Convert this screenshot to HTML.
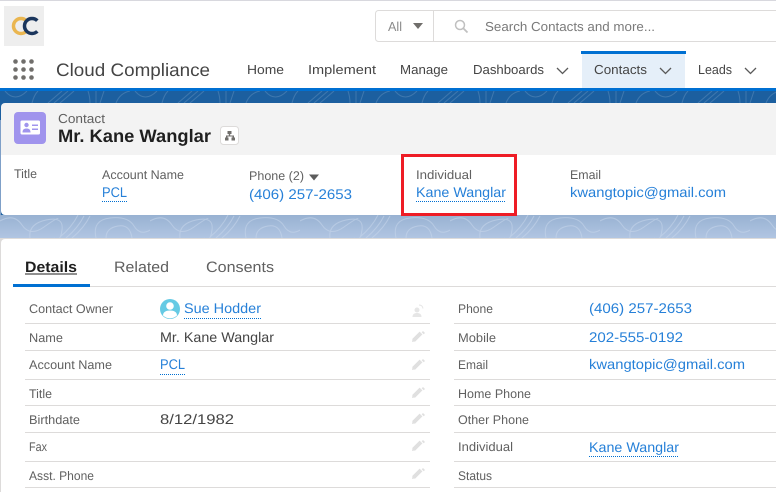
<!DOCTYPE html>
<html lang="en"><head><meta charset="utf-8"><title>Contact</title>
<style>
html,body{margin:0;padding:0;background:#fff;width:776px;height:492px;overflow:hidden}
svg{display:block;filter:blur(.3px)}
text{font-family:"Liberation Sans",sans-serif;text-rendering:geometricPrecision}
.l{font-size:12.5px;fill:#606060}
.v{font-size:14px;fill:#444444}
.a{font-size:14px;fill:#2680d8}
.n{font-size:13px;fill:#444444}
.d{stroke:#0070d2;stroke-width:1;stroke-dasharray:1 1;fill:none}
.r{stroke:#dddbda;stroke-width:1}
</style></head><body>
<svg width="776" height="492" viewBox="0 0 776 492" xmlns="http://www.w3.org/2000/svg">
<defs>
<g id="pen"><path d="M-4.500 4.500L3 -3" stroke="#e0e0e0" stroke-width="4" fill="none"/><path d="M-6 6l.6-3 2.400 2.400z" fill="#e0e0e0"/><path d="M3.700 -3.700l1.300-1.300 2 2-1.300 1.300z" fill="#e0e0e0"/></g>
<path id="chev" d="M0 0l5.500 5.500L11 0" fill="none" stroke="#5a5a5a" stroke-width="1.300"/>
<linearGradient id="bg" x1="0" y1="0" x2="0" y2="1"><stop offset="0" stop-color="#98b2d2"/><stop offset="1" stop-color="#b2c6e3"/></linearGradient>
<pattern id="top" width="130" height="12" patternUnits="userSpaceOnUse" x="0" y="91">
<path d="M5 0q10 12 22 0M32 12q2-8 6-12M48 12l14-12M54 12l14-12M60 12l14-12M88 0q2 6 2 12M96 0v12M104 0q-2 6-4 12M116 12q4-10 14-12" fill="none" stroke="#5f8fbe" stroke-width="1" opacity=".5"/>
</pattern>
<pattern id="bot" width="150" height="23" patternUnits="userSpaceOnUse" x="0" y="215">
<path d="M0 6q14-8 22 4t22 2 14-8M30 23q-2-14 16-18t16 10-8 8M60 22q12-10 18-22M66 23q12-10 18-22M72 23q12-10 18-22M96 23q-4-18 14-20t24 8 16 4M106 23q0-10 12-12t14 12" fill="none" stroke="#c8d6ea" stroke-width="1" opacity=".55"/>
</pattern>
</defs>

<rect width="776" height="492" fill="#fff"/>
<rect width="776" height="1" fill="#d8d8de"/>

<!-- logo -->
<rect x="4" y="6" width="40" height="40" fill="#eeeeee"/>
<path d="M26.300 20.700a7.500 7.500 0 1 0 0 10.600" fill="none" stroke="#eab650" stroke-width="3.500"/>
<path d="M37.300 20.700a7.500 7.500 0 1 0 0 10.600" fill="none" stroke="#1b365d" stroke-width="3.500"/>

<!-- search -->
<rect x="375.500" y="10.500" width="420" height="31" rx="3" fill="#fff" stroke="#dddbda"/>
<line x1="433.500" y1="11" x2="433.500" y2="41" stroke="#dddbda"/>
<text x="388" y="31" font-size="13" fill="#8a8a8a" textLength="14" lengthAdjust="spacingAndGlyphs">All</text>
<path d="M413 23h10l-5 6z" fill="#706e6b"/>
<circle cx="460" cy="25" r="4.500" fill="none" stroke="#c0c0c0" stroke-width="1.500"/>
<path d="M463.500 28.500l4 4" stroke="#c0c0c0" stroke-width="1.800"/>
<text x="485" y="31" font-size="13" fill="#7a7a7a" textLength="170" lengthAdjust="spacingAndGlyphs">Search Contacts and more...</text>

<!-- nav -->
<g fill="#706e6b">
<circle cx="15.500" cy="61.500" r="2.300"/><circle cx="23.500" cy="61.500" r="2.300"/><circle cx="31.500" cy="61.500" r="2.300"/>
<circle cx="15.500" cy="69.500" r="2.300"/><circle cx="23.500" cy="69.500" r="2.300"/><circle cx="31.500" cy="69.500" r="2.300"/>
<circle cx="15.500" cy="77.500" r="2.300"/><circle cx="23.500" cy="77.500" r="2.300"/><circle cx="31.500" cy="77.500" r="2.300"/>
</g>
<text x="56" y="76" font-size="18" fill="#444444" textLength="154" lengthAdjust="spacingAndGlyphs">Cloud Compliance</text>
<rect x="582" y="54" width="103" height="34" fill="#e5eff9"/>
<rect x="581" y="51" width="105" height="3" fill="#0070d2"/>
<text class="n" x="247" y="74" textLength="37" lengthAdjust="spacingAndGlyphs">Home</text>
<text class="n" x="308" y="74" textLength="68" lengthAdjust="spacingAndGlyphs">Implement</text>
<text class="n" x="400" y="74" textLength="48" lengthAdjust="spacingAndGlyphs">Manage</text>
<text class="n" x="473" y="74" textLength="71" lengthAdjust="spacingAndGlyphs">Dashboards</text>
<use href="#chev" x="557" y="68"/>
<text class="n" x="594" y="74" textLength="53" lengthAdjust="spacingAndGlyphs">Contacts</text>
<use href="#chev" x="660" y="68"/>
<text class="n" x="698" y="74" textLength="34" lengthAdjust="spacingAndGlyphs">Leads</text>
<use href="#chev" x="745" y="68"/>

<!-- bands -->
<rect y="88" width="776" height="3" fill="#0070d2"/>
<rect y="91" width="776" height="125" fill="#1c5f9f"/>
<rect y="91" width="776" height="12" fill="url(#top)"/>
<rect y="215" width="776" height="24" fill="url(#bg)"/>
<rect y="215" width="776" height="23" fill="url(#bot)"/>
<rect y="120" width="1" height="95" fill="#7fa0c8"/>

<!-- highlights card -->
<path d="M1 107a4 4 0 0 1 4-4H776V155H1z" fill="#f3f3f3"/>
<path d="M1 155H776V215H5a4 4 0 0 1-4-4z" fill="#fff"/>
<rect x="14" y="112" width="32" height="32" rx="4" fill="#a094ed"/>
<rect x="20.500" y="120.500" width="19.500" height="14" rx="1.500" fill="#fff"/>
<circle cx="26.500" cy="125" r="2.200" fill="#a094ed"/>
<path d="M22.500 132.500c0-3 1.500-4 4-4s4 1 4 4z" fill="#a094ed"/>
<rect x="32" y="124.500" width="6" height="1.500" fill="#a094ed"/>
<rect x="32" y="128.500" width="6" height="1.500" fill="#a094ed"/>
<text x="58" y="123" font-size="13" fill="#606060" textLength="47" lengthAdjust="spacingAndGlyphs">Contact</text>
<text x="58" y="142" font-size="18" font-weight="700" fill="#1f1f1f" textLength="153" lengthAdjust="spacingAndGlyphs">Mr. Kane Wanglar</text>
<rect x="220.500" y="126.500" width="18" height="18" rx="3" fill="#fff" stroke="#dddbda"/>
<path d="M227.500 131h4v3h-1.300v1.500h3.800v2h1v3h-3.500v-3h1v-1h-5v1h1v3H225v-3h1v-2h2.800V134h-1.300z" fill="#706e6b"/>

<text class="l" x="14" y="178" textLength="23" lengthAdjust="spacingAndGlyphs">Title</text>
<text class="l" x="102" y="179" textLength="82" lengthAdjust="spacingAndGlyphs">Account Name</text>
<text class="a" x="102" y="197" textLength="25" lengthAdjust="spacingAndGlyphs">PCL</text>
<line class="d" x1="102" y1="201.500" x2="127" y2="201.500"/>
<text class="l" x="249" y="180" textLength="55" lengthAdjust="spacingAndGlyphs">Phone (2)</text>
<path d="M309 174.500h10l-5 6z" fill="#5c5c5c"/>
<text class="a" x="249" y="199" textLength="103" lengthAdjust="spacingAndGlyphs">(406) 257-2653</text>
<text class="l" x="416" y="179" textLength="56" lengthAdjust="spacingAndGlyphs">Individual</text>
<text class="a" x="416" y="197" textLength="90" lengthAdjust="spacingAndGlyphs">Kane Wanglar</text>
<line class="d" x1="416" y1="201.500" x2="506" y2="201.500"/>
<text class="l" x="570" y="179" textLength="31" lengthAdjust="spacingAndGlyphs">Email</text>
<text class="a" x="570" y="197" textLength="156" lengthAdjust="spacingAndGlyphs">kwangtopic@gmail.com</text>
<rect x="402.500" y="155.500" width="113" height="59" fill="none" stroke="#ee1c25" stroke-width="3"/>

<!-- details card -->
<rect y="238" width="776" height="254" fill="#dddbda"/>
<path d="M1 243a4 4 0 0 1 4-4H776V492H1z" fill="#fff"/>
<text x="25" y="272" font-size="15" font-weight="700" fill="#1f1f1f" textLength="52" lengthAdjust="spacingAndGlyphs">Details</text>
<rect x="25" y="273.500" width="52" height="1" fill="#1f1f1f"/>
<text x="114" y="272" font-size="15" fill="#606060" textLength="55" lengthAdjust="spacingAndGlyphs">Related</text>
<text x="206" y="272" font-size="15" fill="#606060" textLength="68" lengthAdjust="spacingAndGlyphs">Consents</text>
<rect x="13" y="286" width="763" height="1" fill="#dddbda"/>
<rect x="13" y="284" width="77" height="3" fill="#0070d2"/>

<!-- rows -->
<g class="r">
<line x1="25" y1="323.500" x2="430" y2="323.500"/><line x1="25" y1="350.500" x2="430" y2="350.500"/><line x1="25" y1="379.500" x2="430" y2="379.500"/><line x1="25" y1="405.500" x2="430" y2="405.500"/><line x1="25" y1="432.500" x2="430" y2="432.500"/><line x1="25" y1="461.500" x2="430" y2="461.500"/><line x1="25" y1="487.500" x2="430" y2="487.500"/>
<line x1="454" y1="323.500" x2="776" y2="323.500"/><line x1="454" y1="350.500" x2="776" y2="350.500"/><line x1="454" y1="379.500" x2="776" y2="379.500"/><line x1="454" y1="405.500" x2="776" y2="405.500"/><line x1="454" y1="432.500" x2="776" y2="432.500"/><line x1="454" y1="461.500" x2="776" y2="461.500"/><line x1="454" y1="487.500" x2="776" y2="487.500"/>
</g>

<text class="l" x="29" y="313" textLength="84" lengthAdjust="spacingAndGlyphs">Contact Owner</text>
<text class="l" x="29" y="342" textLength="34" lengthAdjust="spacingAndGlyphs">Name</text>
<text class="l" x="29" y="369" textLength="83" lengthAdjust="spacingAndGlyphs">Account Name</text>
<text class="l" x="29" y="398" textLength="23" lengthAdjust="spacingAndGlyphs">Title</text>
<text class="l" x="29" y="424" textLength="51" lengthAdjust="spacingAndGlyphs">Birthdate</text>
<text class="l" x="29" y="451" textLength="18" lengthAdjust="spacingAndGlyphs">Fax</text>
<text class="l" x="29" y="480" textLength="65" lengthAdjust="spacingAndGlyphs">Asst. Phone</text>

<circle cx="170" cy="309" r="10" fill="#65cae4"/>
<circle cx="170" cy="306" r="3.800" fill="#fff"/>
<path d="M163 315.500c0-3.500 3-5 7-5s7 1.500 7 5a10 10 0 0 1-14 0z" fill="#fff"/>
<text class="a" x="184" y="313" textLength="77" lengthAdjust="spacingAndGlyphs">Sue Hodder</text>
<line class="d" x1="184" y1="318.500" x2="261" y2="318.500"/>
<text class="v" x="160" y="342" textLength="114" lengthAdjust="spacingAndGlyphs">Mr. Kane Wanglar</text>
<text class="a" x="160" y="369" textLength="25" lengthAdjust="spacingAndGlyphs">PCL</text>
<line class="d" x1="160" y1="374.500" x2="185" y2="374.500"/>
<text class="v" x="160" y="424" textLength="74" lengthAdjust="spacingAndGlyphs">8/12/1982</text>

<circle cx="417" cy="310" r="2.500" fill="#e6e6e6"/>
<path d="M412.500 317c0-3 2-4 4.500-4s4.500 1 4.500 4z" fill="#e6e6e6"/>
<path d="M419 305q3.500 0 4 3.500" fill="none" stroke="#e6e6e6" stroke-width="1"/>
<use href="#pen" x="418" y="336"/><use href="#pen" x="418" y="364"/><use href="#pen" x="418" y="392"/><use href="#pen" x="418" y="418"/><use href="#pen" x="418" y="445"/><use href="#pen" x="418" y="473"/>

<text class="l" x="458" y="313" textLength="35" lengthAdjust="spacingAndGlyphs">Phone</text>
<text class="l" x="458" y="342" textLength="38" lengthAdjust="spacingAndGlyphs">Mobile</text>
<text class="l" x="458" y="369" textLength="30" lengthAdjust="spacingAndGlyphs">Email</text>
<text class="l" x="458" y="398" textLength="73" lengthAdjust="spacingAndGlyphs">Home Phone</text>
<text class="l" x="458" y="424" textLength="71" lengthAdjust="spacingAndGlyphs">Other Phone</text>
<text class="l" x="458" y="451" textLength="55" lengthAdjust="spacingAndGlyphs">Individual</text>
<text class="l" x="458" y="480" textLength="34" lengthAdjust="spacingAndGlyphs">Status</text>

<text class="a" x="589" y="313" textLength="103" lengthAdjust="spacingAndGlyphs">(406) 257-2653</text>
<text class="a" x="589" y="342" textLength="94" lengthAdjust="spacingAndGlyphs">202-555-0192</text>
<text class="a" x="589" y="369" textLength="156" lengthAdjust="spacingAndGlyphs">kwangtopic@gmail.com</text>
<text class="a" x="589" y="452" textLength="90" lengthAdjust="spacingAndGlyphs">Kane Wanglar</text>
<line class="d" x1="589" y1="456.500" x2="679" y2="456.500"/>
</svg>
</body></html>
